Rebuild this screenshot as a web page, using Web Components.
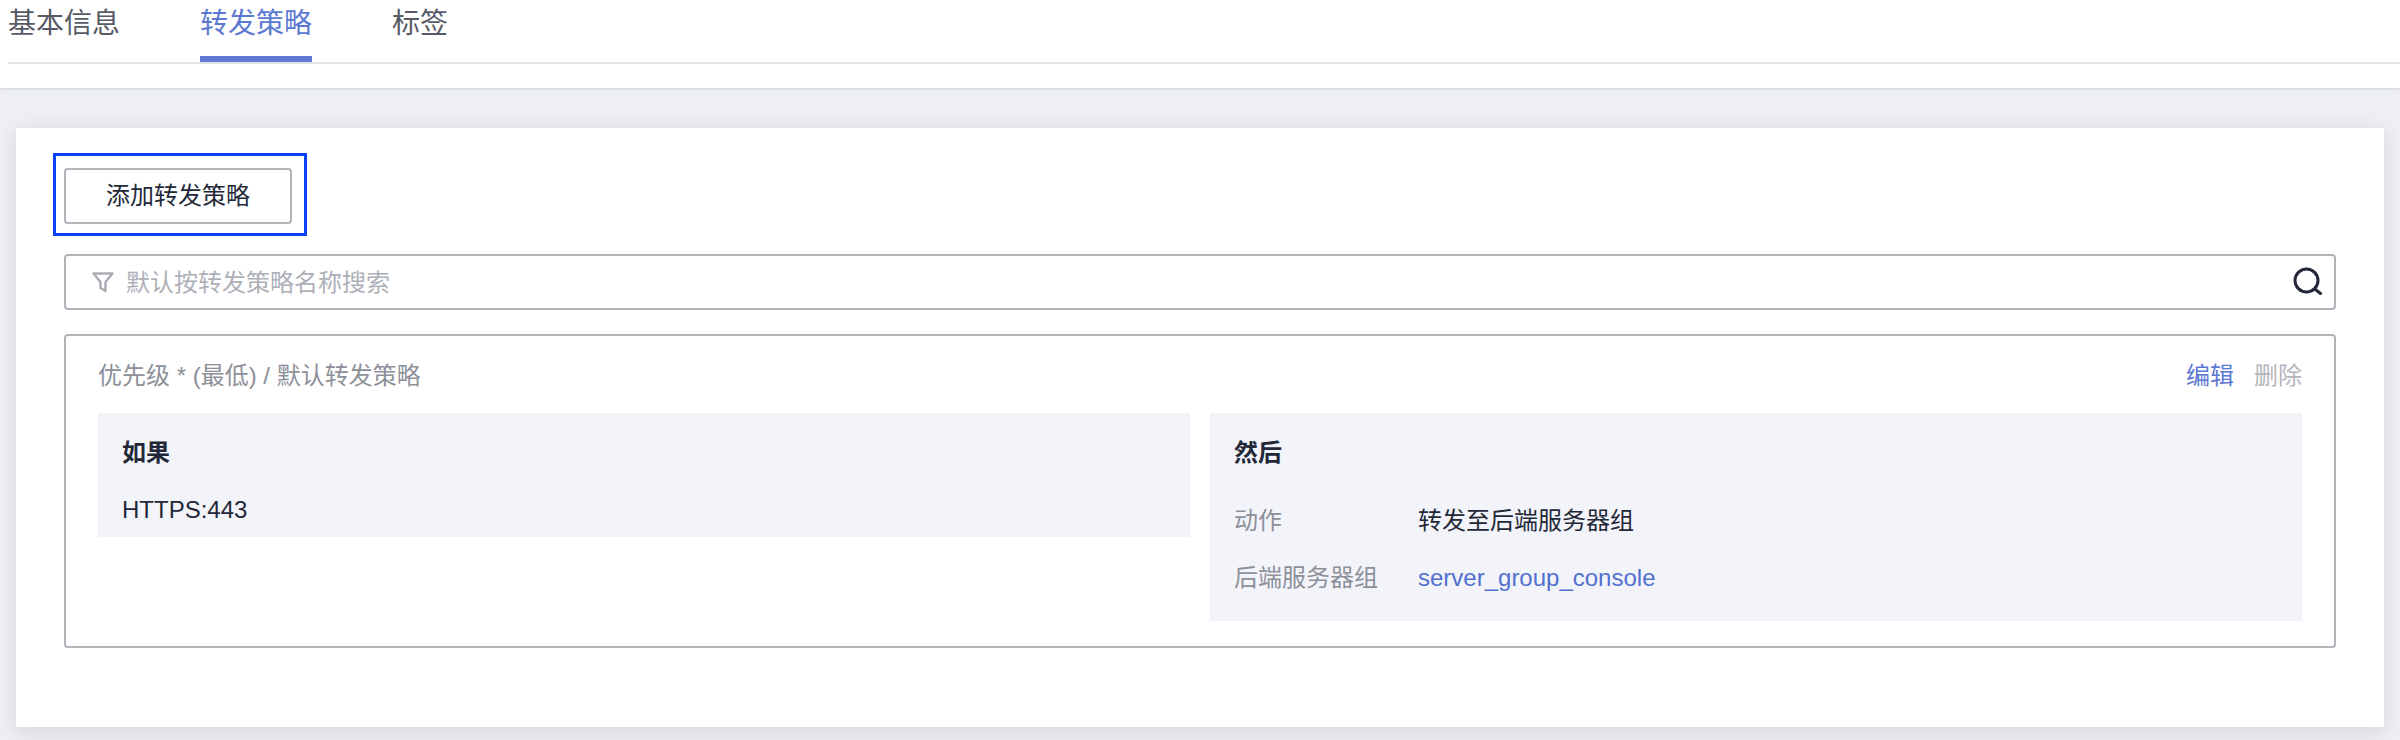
<!DOCTYPE html>
<html lang="zh-CN">
<head>
<meta charset="utf-8">
<title>转发策略</title>
<style>
	html, body { margin:0; height:740px; overflow:hidden; }
	body {
		background:#eef0f4;
		font:24px/32px "Liberation Sans", "Noto Sans CJK SC", sans-serif;
		color:#232838;
	}
</style>
</head>
<body>

<lb-tabs>
	<lb-tab>基本信息</lb-tab>
	<lb-tab active>转发策略</lb-tab>
	<lb-tab>标签</lb-tab>
</lb-tabs>

<lb-card>
	<lb-button marked>添加转发策略</lb-button>
	<lb-search placeholder="默认按转发策略名称搜索"></lb-search>
	<lb-rule heading="优先级 * (最低) / 默认转发策略">
		<lb-panel heading="如果">
			<div>HTTPS:443</div>
		</lb-panel>
		<lb-panel heading="然后" wide>
			<lb-field label="动作">转发至后端服务器组</lb-field>
			<lb-field label="后端服务器组" link>server_group_console</lb-field>
		</lb-panel>
	</lb-rule>
</lb-card>

<script>
/* every element just stamps its html + css in an open root */
class LbBase extends HTMLElement {
	constructor() {
		super();
		this.attachShadow({ mode: 'open' }).innerHTML = `<style>${this.constructor.css}</style>${this.render()}`;
	}
	render() { return '<slot></slot>'; }
}

class LbTabs extends LbBase {
	static css = `
		:host { display:block; height:88px; background:#fff; padding-left:8px; box-shadow:0 1px 3px rgba(60,64,80,.18); position:relative; }
		.row { display:flex; gap:80px; height:62px; border-bottom:2px solid #e1e2e9; }
	`;
	render() { return '<div class="row"><slot></slot></div>'; }
}

class LbTab extends LbBase {
	static css = `
		:host { display:block; height:62px; box-sizing:border-box; font-size:28px; line-height:47px; color:#565a66; }
		:host([active]) { color:#5b78d2; border-bottom:6px solid #5f7bd5; }
	`;
}

class LbCard extends LbBase {
	static css = `
		:host { display:flex; flex-direction:column; box-sizing:border-box; margin:40px 16px 0; height:599px; padding:40px 48px 0; background:#fff; box-shadow:0 4px 20px rgba(60,64,80,.16); }
	`;
}

class LbButton extends LbBase {
	static css = `
		:host { display:block; position:relative; align-self:flex-start; }
		button { display:block; width:228px; height:56px; box-sizing:border-box; padding:0; background:#fff; border:2px solid #b0b3ba; border-radius:4px; font:inherit; color:inherit; }
		.mark { position:absolute; left:-11px; top:-15px; width:254px; height:83px; box-sizing:border-box; border:3px solid #0a41f5; pointer-events:none; }
	`;
	render() {
		return `<button><slot></slot></button>${this.hasAttribute('marked') ? '<div class="mark"></div>' : ''}`;
	}
}

class LbSearch extends LbBase {
	static css = `
		:host { display:flex; align-items:center; box-sizing:border-box; height:56px; margin-top:30px; padding:0 12px 0 26px; border:2px solid #b0b3ba; border-radius:4px; }
		.filter { width:22px; height:22px; margin-right:12px; flex:none; }
		.text { flex:1; color:#adb0b8; padding-top:2px; }
		.find { width:32px; height:32px; flex:none; }
	`;
	render() {
		return `
			<svg class="filter" viewBox="0 0 22 22" fill="none" stroke="#a9acb4" stroke-width="2.400" stroke-linejoin="round" stroke-linecap="round"><path d="M1.500 2.500h19l-7 8.500v9l-5-3v-6z"/></svg>
			<span class="text">${this.getAttribute('placeholder')}</span>
			<svg class="find" viewBox="0 0 32 32" fill="none" stroke="#22283a" stroke-width="3" stroke-linecap="round"><circle cx="16.500" cy="14.500" r="11.500"/><path d="M26 24l4.500 3.500"/></svg>
		`;
	}
}

class LbRule extends LbBase {
	static css = `
		:host { display:block; box-sizing:border-box; height:314px; margin-top:24px; padding:0 32px; border:2px solid #b0b3ba; border-radius:4px; }
		header { display:flex; justify-content:space-between; box-sizing:border-box; height:77px; padding-top:3px; align-items:center; color:#8d9099; }
		.ops { display:flex; gap:20px; }
		.edit { color:#5b78d2; }
		.del { color:#b3b5bb; }
		.body { display:grid; grid-template-columns:minmax(0,1fr) minmax(0,1fr); gap:20px; align-items:start; }
	`;
	render() {
		return `
			<header>
				<span>${this.getAttribute('heading')}</span>
				<span class="ops"><span class="edit">编辑</span><span class="del">删除</span></span>
			</header>
			<div class="body"><slot></slot></div>
		`;
	}
}

class LbPanel extends LbBase {
	static css = `
		:host { display:block; box-sizing:border-box; padding:24px 24px 0; height:124px; background:#f3f4fa; }
		:host([wide]) { height:208px; }
		h4 { margin:0; font:inherit; font-weight:bold; height:32px; }
		.rows { margin-top:25px; }
		:host([wide]) .rows { margin-top:36px; }
	`;
	render() {
		return `<h4>${this.getAttribute('heading')}</h4><div class="rows"><slot></slot></div>`;
	}
}

class LbField extends LbBase {
	static css = `
		:host { display:grid; grid-template-columns:184px 1fr; height:57px; }
		.label { color:#8d9099; }
		:host([link]) .val { color:#5170cf; }
	`;
	render() {
		return `<span class="label">${this.getAttribute('label')}</span><span class="val"><slot></slot></span>`;
	}
}

customElements.define('lb-tabs', LbTabs);
customElements.define('lb-tab', LbTab);
customElements.define('lb-card', LbCard);
customElements.define('lb-button', LbButton);
customElements.define('lb-search', LbSearch);
customElements.define('lb-rule', LbRule);
customElements.define('lb-panel', LbPanel);
customElements.define('lb-field', LbField);
</script>
</body>
</html>
